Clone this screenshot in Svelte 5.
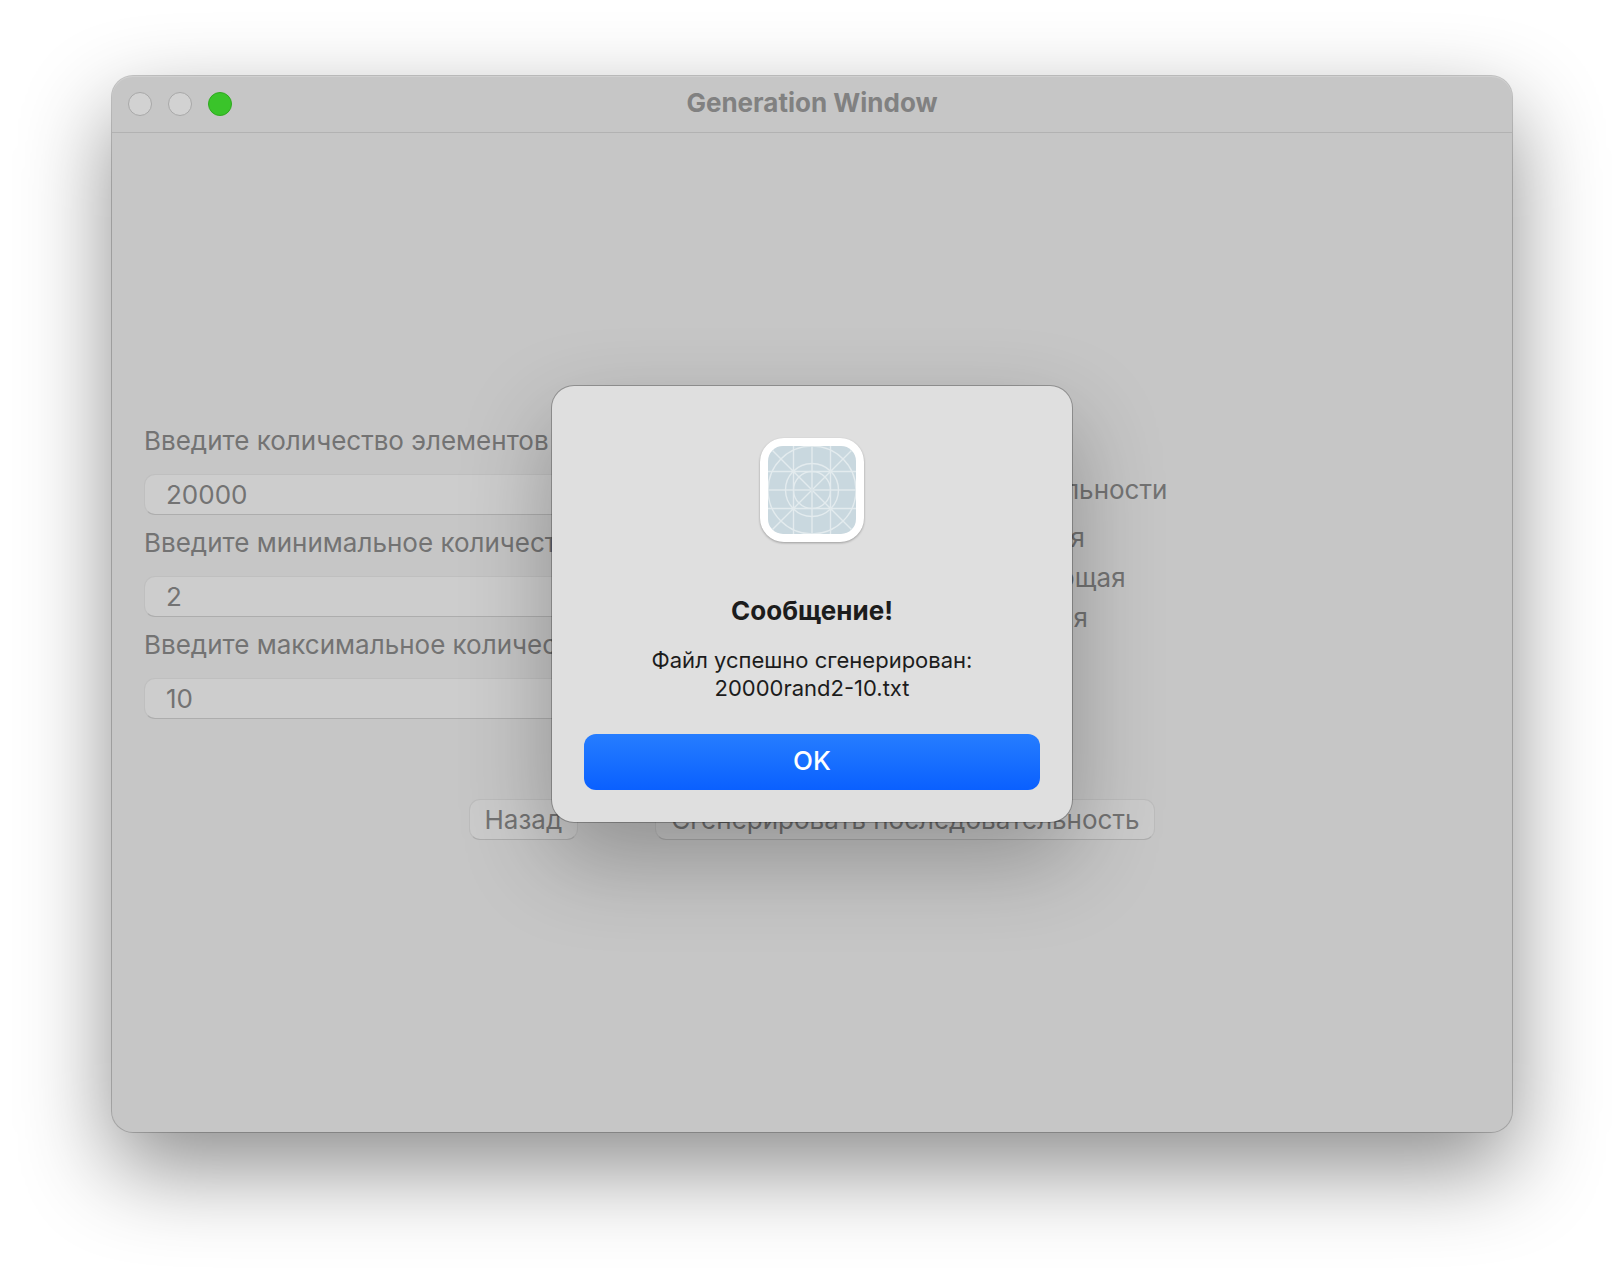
<script>
  let count = $state('20000');
  let min = $state('2');
  let max = $state('10');
  let order = $state('mixed');

  const orders = [
    { id: 'mixed', name: 'Смешанная' },
    { id: 'asc', name: 'Возрастающая' },
    { id: 'desc', name: 'Убывающая' }
  ];
</script>

<div class="desktop">
  <div class="window">
    <header class="titlebar">
      <div class="lights">
        <button class="light" aria-label="Close"></button>
        <button class="light" aria-label="Minimize"></button>
        <button class="light zoom" aria-label="Zoom"></button>
      </div>
      <h1>Generation Window</h1>
    </header>

    <main class="content">
      <div class="columns">
        <div class="fields">
          <div class="field">
            <label for="count">Введите количество элементов</label>
            <input id="count" type="text" bind:value={count} />
          </div>
          <div class="field">
            <label for="min">Введите минимальное количество</label>
            <input id="min" type="text" bind:value={min} />
          </div>
          <div class="field">
            <label for="max">Введите максимальное количество</label>
            <input id="max" type="text" bind:value={max} />
          </div>
        </div>

        <fieldset class="orders">
          <legend>Тип последовательности</legend>
          {#each orders as item}
            <label class="order">
              <input type="radio" name="order" value={item.id} bind:group={order} />
              {item.name}
            </label>
          {/each}
        </fieldset>
      </div>

      <div class="actions">
        <button class="push">Назад</button>
        <button class="push">Сгенерировать последовательность</button>
      </div>
    </main>

    <div class="overlay">
      <div class="dialog" role="alertdialog" aria-modal="true" aria-labelledby="alert-title" aria-describedby="alert-text">
        <svg class="app-icon" viewBox="0 0 104 104" aria-hidden="true">
          <defs>
            <clipPath id="plate"><rect x="8" y="8" width="88" height="88" rx="15" /></clipPath>
          </defs>
          <rect width="104" height="104" rx="24" fill="#fff" />
          <g clip-path="url(#plate)">
            <rect x="8" y="8" width="88" height="88" fill="#c9d8df" />
            <g fill="none" stroke="#e3ebee" stroke-width="1.4">
              <path d="M33.5 8v88M70.5 8v88M8 33.5h88M8 70.5h88M8 8l88 88M96 8L8 96" />
              <path d="M52 8v88M8 52h88" stroke-width="2" stroke="#dbe5e9" />
              <circle cx="52" cy="52" r="18.5" />
              <circle cx="52" cy="52" r="26.5" />
              <circle cx="52" cy="52" r="44" />
            </g>
          </g>
        </svg>
        <h2 id="alert-title">Сообщение!</h2>
        <p id="alert-text">Файл успешно сгенерирован:<br />20000rand2-10.txt</p>
        <button class="ok">OK</button>
      </div>
    </div>
  </div>
</div>

<style>
  :global(body) {
    margin: 0;
    background: #fff;
  }

  .desktop {
    box-sizing: border-box;
    display: flex;
    min-height: 100vh;
    padding: 76px 112px 148px;
    overflow: hidden;
    font-family: Inter, 'Liberation Sans', sans-serif;
    font-size: 26px;
    line-height: 32px;
    color: #737373;
  }

  .window {
    position: relative;
    display: flex;
    flex: 1;
    flex-direction: column;
    border-radius: 21px;
    background: #c6c6c6;
    box-shadow:
      inset 0 1px 0 #d0d0d0,
      0 0 0 1px rgba(0, 0, 0, 0.2),
      0 36px 90px rgba(0, 0, 0, 0.45);
  }

  .titlebar {
    display: grid;
    grid-template-columns: 1fr auto 1fr;
    align-items: center;
    height: 56px;
    padding: 0 16px;
    border-bottom: 1px solid #b2b2b2;
  }

  .lights {
    display: flex;
    gap: 16px;
  }

  .light {
    box-sizing: border-box;
    width: 24px;
    height: 24px;
    padding: 0;
    border: 1px solid #a8a8a8;
    border-radius: 50%;
    background: #d2d2d2;
  }

  .zoom {
    border-color: #2fa91f;
    background: #3ac42a;
  }

  h1 {
    margin: 0;
    padding-bottom: 2px;
    font-size: 26px;
    font-weight: 700;
    color: #818181;
  }

  .content {
    display: flex;
    flex: 1;
    flex-direction: column;
    justify-content: center;
    gap: 80px;
    padding: 0 32px;
  }

  .columns {
    display: grid;
    grid-template-columns: 1fr 1fr;
    align-items: center;
    gap: 70px;
  }

  .fields {
    display: flex;
    flex-direction: column;
    gap: 12px;
  }

  .field {
    display: flex;
    flex-direction: column;
    gap: 17px;
    white-space: nowrap;
  }

  .field input {
    box-sizing: border-box;
    height: 41px;
    padding: 0 21px;
    border: 1px solid #bfbfbf;
    border-bottom-color: #adadad;
    border-radius: 11px;
    background: #cdcdcd;
    font: inherit;
    color: inherit;
  }

  .orders {
    display: flex;
    flex-direction: column;
    gap: 8px;
    margin: 0;
    padding: 0 0 36px;
    border: 0;
    white-space: nowrap;
  }

  legend {
    margin-bottom: 16px;
    padding: 0;
  }

  .order {
    display: flex;
    align-items: center;
    gap: 12px;
    padding-left: 48px;
  }

  .order input {
    width: 28px;
    height: 28px;
    margin: 0;
  }

  .actions {
    display: flex;
    justify-content: center;
    gap: 77px;
  }

  .push {
    box-sizing: border-box;
    height: 41px;
    padding: 0 15px;
    border: 1px solid #bcbcbc;
    border-bottom-color: #adadad;
    border-radius: 11px;
    background: #cbcbcb;
    font: inherit;
    color: inherit;
  }

  .overlay {
    position: absolute;
    inset: 0;
    display: flex;
    align-items: center;
    justify-content: center;
  }

  .dialog {
    box-sizing: border-box;
    display: flex;
    flex-direction: column;
    align-items: center;
    width: 520px;
    padding: 52px 32px 32px;
    border-radius: 22px;
    background: #dfdfdf;
    box-shadow:
      0 0 0 1px rgba(0, 0, 0, 0.25),
      0 36px 90px rgba(0, 0, 0, 0.28);
    color: #1c1c1c;
    text-align: center;
  }

  .app-icon {
    width: 104px;
    height: 104px;
    filter: drop-shadow(0 1px 1px rgba(0, 0, 0, 0.3));
  }

  h2 {
    margin: 53px 0 19px;
    font-size: 26px;
    font-weight: 700;
    line-height: 32px;
  }

  p {
    margin: 0 0 32px;
    font-size: 22px;
    line-height: 28px;
  }

  .ok {
    width: 100%;
    height: 56px;
    padding: 0 0 2px;
    border: 0;
    border-radius: 12px;
    background: linear-gradient(#267dff, #0a60ff);
    font: inherit;
    font-weight: 500;
    color: #fff;
  }
</style>
